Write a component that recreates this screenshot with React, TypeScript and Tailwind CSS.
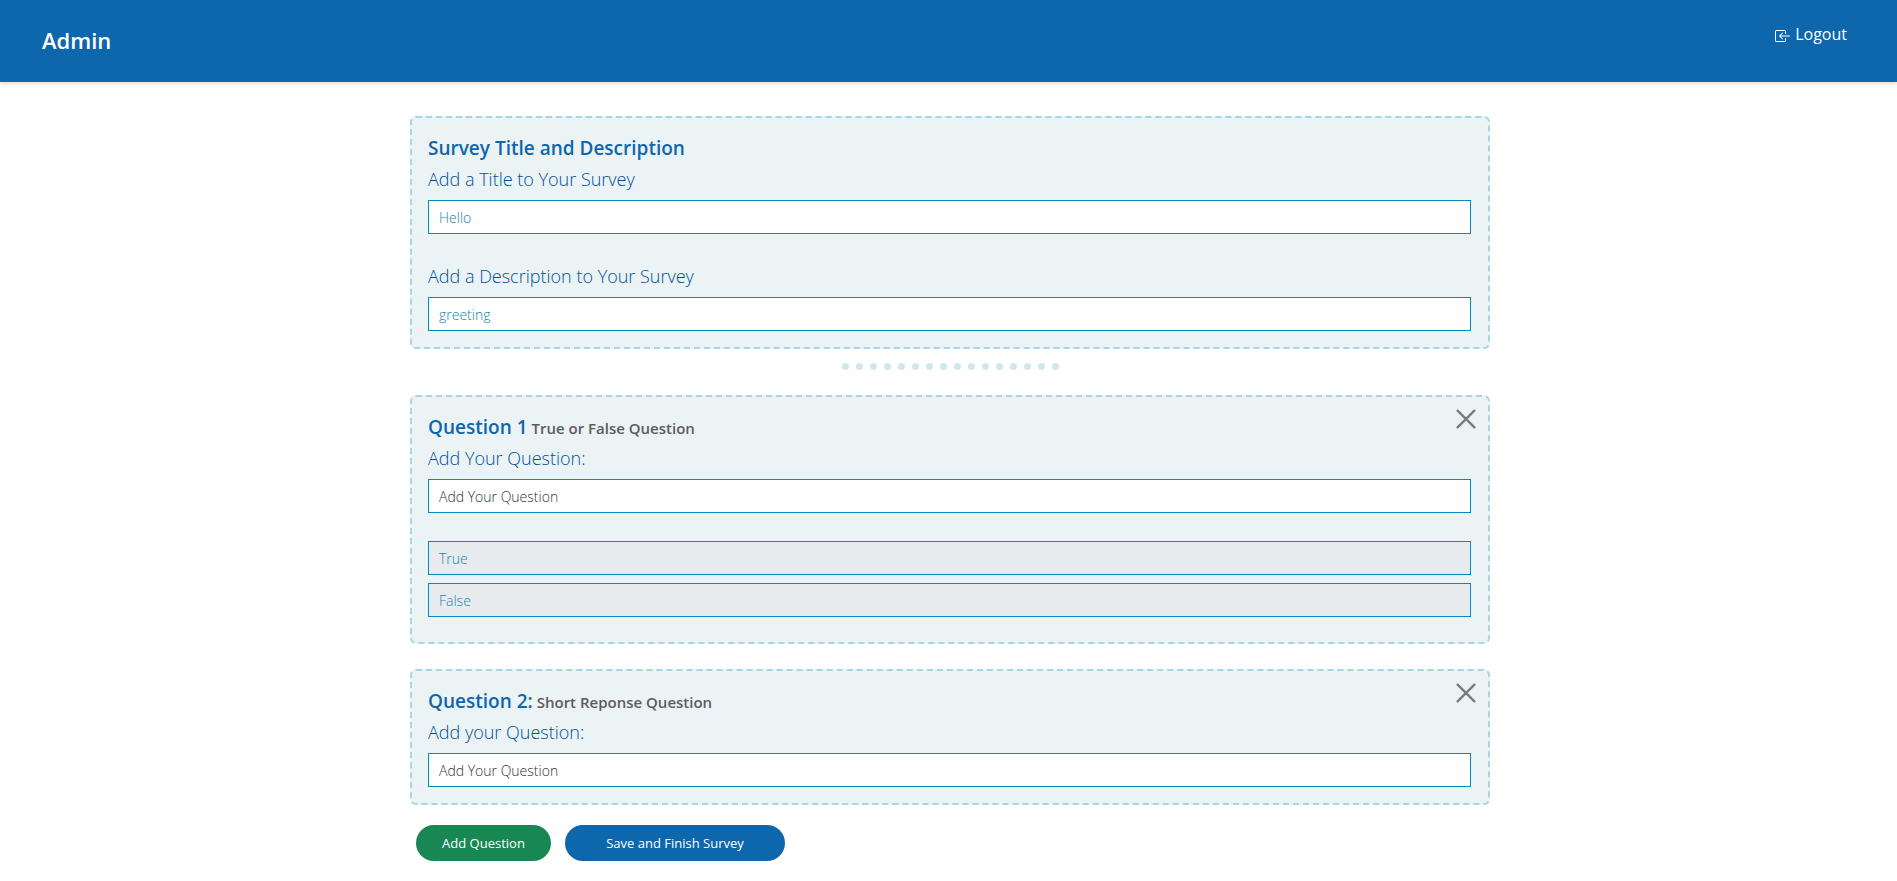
import { useState } from "react";
import type { InputHTMLAttributes, ReactNode } from "react";
import { BsBoxArrowInLeft } from "react-icons/bs";

function Card({ children, className = "pb-4" }: { children: ReactNode; className?: string }) {
  return (
    <section
      className={`relative rounded-md border-2 border-dashed border-[#a6d5e3] bg-[#ebf3f5] pt-4 pr-[17px] pl-4 ${className}`}
    >
      {children}
    </section>
  );
}

function Heading({ title, kind }: { title: string; kind?: string }) {
  return (
    <h2 className="flex items-baseline gap-1 text-[19px] leading-7 font-semibold text-[#0e66ac]">
      {title}
      {kind && <span className="text-[15px] leading-5 text-[#5c5c5c]">{kind}</span>}
    </h2>
  );
}

function TextBox({ className = "", ...rest }: InputHTMLAttributes<HTMLInputElement>) {
  return (
    <input
      type="text"
      className={`block h-[34px] w-full border border-[#008ebd] bg-white px-2.5 text-[14px] font-light text-[#1583b4] outline-none placeholder:text-[#333333] disabled:bg-[#e8ebee] ${className}`}
      {...rest}
    />
  );
}

function Field({
  id,
  label,
  initial = "",
  placeholder,
}: {
  id: string;
  label: string;
  initial?: string;
  placeholder?: string;
}) {
  const [value, setValue] = useState(initial);
  return (
    <div>
      <label htmlFor={id} className="mb-[7px] block text-[18px] leading-7 font-light text-[#00509a]">
        {label}
      </label>
      <TextBox
        id={id}
        value={value}
        placeholder={placeholder}
        onChange={(event) => setValue(event.target.value)}
      />
    </div>
  );
}

function RemoveButton({ label }: { label: string }) {
  return (
    <button type="button" aria-label={label} className="absolute top-3 right-3 cursor-pointer text-[#757b7d]">
      <svg viewBox="0 0 20 20" className="size-5" fill="none" stroke="currentColor" strokeWidth="2.3" strokeLinecap="round">
        <path d="M1.6 1.6 18.4 18.4M18.4 1.6 1.6 18.4" />
      </svg>
    </button>
  );
}

export default function App() {
  return (
    <div className="min-h-screen bg-white font-['Open_Sans','Noto_Sans',sans-serif]">
      <header className="flex h-[82px] items-start justify-between bg-[#0e66ac] px-[42px] text-white shadow-[0_2px_4px_rgba(0,0,0,0.12)]">
        <h1 className="self-center pb-0.5 text-[22px] leading-8 font-semibold">Admin</h1>
        <a href="#logout" className="mt-5 mr-2 flex items-center gap-1 text-[16px] leading-7">
          <BsBoxArrowInLeft className="mt-1 size-4" />
          Logout
        </a>
      </header>

      <main className="mx-auto w-full max-w-[1083px] pt-[34px] pb-5 pl-[3px]">
        <Card>
          <Heading title="Survey Title and Description" />
          <div className="mt-[3px] flex flex-col gap-7">
            <Field id="survey-title" label="Add a Title to Your Survey" initial="Hello" />
            <Field id="survey-description" label="Add a Description to Your Survey" initial="greeting" />
          </div>
        </Card>

        <div className="flex h-[46px] justify-center gap-[7px] pt-3.5" aria-hidden="true">
          {Array.from({ length: 16 }, (_, index) => (
            <span key={index} className="size-[7px] rounded-full bg-[#cfe8ef]" />
          ))}
        </div>

        <div className="flex flex-col gap-[25px]">
          <Card className="pb-[25px]">
            <RemoveButton label="Remove question 1" />
            <Heading title="Question 1" kind="True or False Question" />
            <div className="mt-[3px] mb-7">
              <Field id="question-1" label="Add Your Question:" placeholder="Add Your Question" />
            </div>
            <div className="flex flex-col gap-2">
              <TextBox aria-label="First answer" defaultValue="True" disabled />
              <TextBox aria-label="Second answer" defaultValue="False" disabled />
            </div>
          </Card>

          <Card>
            <RemoveButton label="Remove question 2" />
            <Heading title="Question 2:" kind="Short Reponse Question" />
            <div className="mt-[3px]">
              <Field id="question-2" label="Add your Question:" placeholder="Add Your Question" />
            </div>
          </Card>
        </div>

        <div className="mt-5 ml-1.5 flex gap-3.5 text-[13px] leading-5 text-white">
          <button type="button" className="h-9 w-[135px] cursor-pointer rounded-full bg-[#198754]">
            Add Question
          </button>
          <button type="button" className="h-9 w-[220px] cursor-pointer rounded-full bg-[#0e66ac]">
            Save and Finish Survey
          </button>
        </div>
      </main>
    </div>
  );
}
